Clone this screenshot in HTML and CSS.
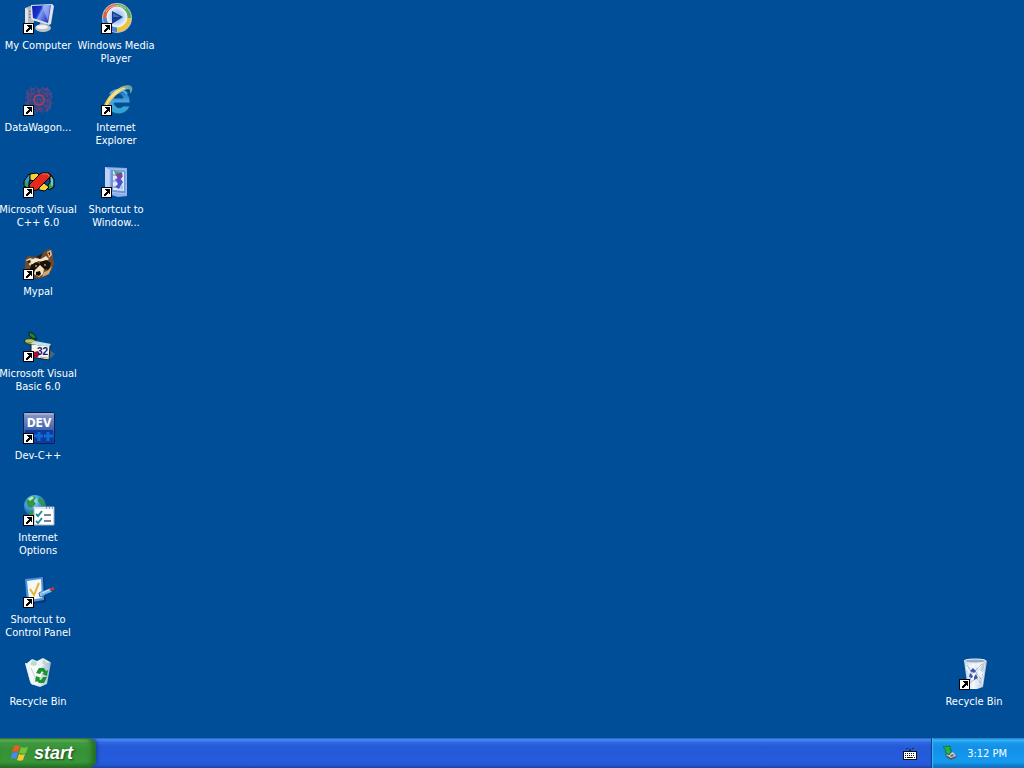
FILE: index.html
```html
<!DOCTYPE html>
<html lang="en">
<head>
    <meta charset="UTF-8">
    <meta name="viewport" content="width=device-width, initial-scale=1.0">
    <title>Desktop</title>
    <link rel="stylesheet" href="styles.css">
</head>
<body>
    <!-- Shared shapes -->
    <svg class="defs" width="0" height="0" aria-hidden="true">
        <defs>
            <symbol id="arrow" viewBox="0 0 11 11">
                <g stroke="none">
                    <path d="M0 0h11v11H0z" fill="#000"/>
                    <path d="M1 1h9v9H1z" fill="#fff"/>
                    <path d="M4 2h5v5H8V6H7v1H6v1H5v1H3V7h1V6h1V5h1V4H5V3H4z" fill="#000"/>
                </g>
            </symbol>
            <linearGradient id="screen" x1="0" y1="0" x2="1" y2="0.5">
                <stop offset="0" stop-color="#0a18a8"/>
                <stop offset="0.45" stop-color="#1c35cc"/>
                <stop offset="0.55" stop-color="#7f9cf5"/>
                <stop offset="1" stop-color="#2038c4"/>
            </linearGradient>
            <radialGradient id="disc">
                <stop offset="0" stop-color="#7fb2ec"/>
                <stop offset="0.6" stop-color="#b9d2f4"/>
                <stop offset="1" stop-color="#eef4ff"/>
            </radialGradient>
            <radialGradient id="globe" cx="0.4" cy="0.3" r="0.7">
                <stop offset="0" stop-color="#d8f6ff"/>
                <stop offset="0.4" stop-color="#4cb0e4"/>
                <stop offset="1" stop-color="#0b4c96"/>
            </radialGradient>
            <linearGradient id="ie" x1="0" y1="0" x2="0" y2="1">
                <stop offset="0" stop-color="#1468b4"/>
                <stop offset="0.5" stop-color="#4aa8e4"/>
                <stop offset="1" stop-color="#2ba0cc"/>
            </linearGradient>
            <linearGradient id="gold" x1="0" y1="1" x2="1" y2="0">
                <stop offset="0" stop-color="#e8b030"/>
                <stop offset="0.6" stop-color="#f6de78"/>
                <stop offset="1" stop-color="#3f8fae"/>
            </linearGradient>
            <linearGradient id="dev" x1="0" y1="0" x2="0" y2="1">
                <stop offset="0" stop-color="#8d9cc8"/>
                <stop offset="0.5" stop-color="#4868b0"/>
                <stop offset="1" stop-color="#0838a0"/>
            </linearGradient>
            <linearGradient id="bin" x1="0" y1="0" x2="1" y2="0">
                <stop offset="0" stop-color="#bccfe2"/>
                <stop offset="0.4" stop-color="#f6f9fc"/>
                <stop offset="1" stop-color="#a5b9ce"/>
            </linearGradient>
        </defs>
    </svg>

    <!-- Desktop -->
    <main class="desktop">
        <nav class="icons" aria-label="Desktop shortcuts">
            <a class="item" href="#my-computer">
                <svg class="icon" viewBox="0 0 32 32">
                    <path d="M2 6l5-2 4 2v17l-4 2-5-3z" fill="#b4b8c2"/>
                    <path d="M2 6l3 1v16l-3-1z" fill="#e2e2df"/>
                    <path d="M6 9l3 1M6 12l3 1M6 15l3 1" stroke="#73809a"/>
                    <path d="M18 19l5 1v4h-7z" fill="#9ea7b6"/>
                    <ellipse cx="20" cy="26" rx="8" ry="4" fill="#b9c0ca"/>
                    <ellipse cx="19" cy="25" rx="6" ry="2" fill="#f1f1ef"/>
                    <path d="M8 3l21-1 2 2-3 18-2 1-17-5-1-2z" fill="#dfe2e8"/>
                    <path d="M9 4l19-1-3 18-15-5z" fill="url(#screen)"/>
                    <path d="M19 4l8-1-2 16z" fill="#adc0ff" opacity=".6"/>
                    <use href="#arrow" y="21" width="11" height="11"/>
                </svg>
                <span class="label">My Computer</span>
            </a>
            <a class="item" href="#datawagon">
                <svg class="icon" viewBox="0 0 32 32" fill="none" stroke="#753f72">
                    <path d="M5 5h21l2 5v15l-4 3H6l-3-5V9z" fill="#5b4680" stroke="none" opacity=".35"/>
                    <circle cx="16" cy="16" r="5" stroke="#a03f5c" stroke-width="2"/>
                    <circle cx="16" cy="16" r="9" stroke-dasharray="3 2" stroke="#8c4064"/>
                    <path d="M16 11V5l-4-3M16 8l4-5M20 12l4-4V3M22 10h6M21 16h5l4-3M26 16l4 4M20 20l4 4v4M22 22h6M16 21v5l-4 3M16 25l4 4M12 20l-4 4M10 22H4M11 16H6l-4-3M6 16l-4 4M12 12L8 8V3M10 10H4V6"/>
                    <path d="M8 5h4M20 5h5l3 4v4M5 10v4M27 18v6l-4 3M5 18v5" stroke="#65518b"/>
                    <path d="M14 15h4v4h-4z" stroke="#5e4d80"/>
                    <use href="#arrow" y="21" width="11" height="11"/>
                </svg>
                <span class="label">DataWagon...</span>
            </a>
            <a class="item" href="#visual-cpp">
                <svg class="icon" viewBox="0 0 32 32" stroke="#000" stroke-linejoin="round">
                    <path d="M1 15l5-7 3 2-3 6v7l-5-3z" fill="#2fa54b"/>
                    <path d="M2 15l4-6v5l-2 4z" fill="#3c8fe5" stroke="none"/>
                    <path d="M7 8l7-1 3 3-5 5-5-1z" fill="#f6d53c"/>
                    <path d="M26 7l5 6v8l-5 3-2-3 3-5z" fill="#2fa54b"/>
                    <path d="M28 11l2 3v5l-2 1z" fill="#7fbcf2" stroke="none"/>
                    <path d="M16 21l5-4 5 4-4 4-6-1z" fill="#f6d53c"/>
                    <path d="M6 19L18 7h8l2 3-14 14-7 1z" fill="#e5291c"/>
                    <path d="M19 8h6l1 2" fill="none" stroke="#ff6b4d"/>
                    <use href="#arrow" y="21" width="11" height="11"/>
                </svg>
                <span class="label">Microsoft Visual<br>C++ 6.0</span>
            </a>
            <a class="item" href="#mypal">
                <svg class="icon" viewBox="0 0 32 32">
                    <path d="M2 12l3-4 8 1 7-4 5-4 4 1 1 7 1 6-2 7-6 6-8 3-8-3-5-7z" fill="#6e4a2f"/>
                    <path d="M24 4l4-2 1 5-3 3z" fill="#e7b386"/>
                    <path d="M25 5l2-1v4z" fill="#392319"/>
                    <path d="M3 12l4-2 6 2-6 6z" fill="#e6cda8"/>
                    <path d="M7 13l5-3 6 1 5-3 3 3-5 3-6-1-5 5z" fill="#f4e6ca"/>
                    <path d="M4 13l3-1 1 2-3 2z" fill="#392319"/>
                    <path d="M8 17l5-3 4 2-1 5-4 2-5-2z" fill="#17120e"/>
                    <path d="M17 14l6-2 5 3-2 7-5-1-4-4z" fill="#17120e"/>
                    <path d="M12 22l5-5 4 4-1 5-4 3-5-3z" fill="#f2dfbe"/>
                    <path d="M24 23l5-5-3 8-7 3 2-5z" fill="#d7a46c"/>
                    <path d="M13 24l4-1 1 3-2 2-3-1z" fill="#080808"/>
                    <circle cx="13" cy="18" r="1" fill="#d98c38"/>
                    <circle cx="22" cy="17" r="1" fill="#d98c38"/>
                    <path d="M13 9l7-4-3 6z" fill="#2b1b12"/>
                    <use href="#arrow" y="21" width="11" height="11"/>
                </svg>
                <span class="label">Mypal</span>
            </a>
            <a class="item" href="#visual-basic">
                <svg class="icon" viewBox="0 0 32 32">
                    <path d="M27 20l5 4-5 5h-9z" fill="#456487"/>
                    <path d="M6 2l5 2 3 5-5-1-3-3z" fill="#2b7d3e" stroke="#062a18"/>
                    <path d="M12 9v5" stroke="#062a18"/>
                    <path d="M1 11c3-4 9-3 12 0-4 5-9 4-12 0z" fill="#8fa544" stroke="#23351a"/>
                    <path d="M3 11h8" stroke="#dfe08a"/>
                    <path d="M8 14l19 2-1 14-18-3z" fill="#f6f5e8" stroke="#17191c"/>
                    <path d="M7 14l5-3 16 3-2 3z" fill="#c3e2e8"/>
                    <path d="M11 22l4-1 2 3-3 4-4-1z" fill="#a40e2d"/>
                    <text class="calendar-number" x="14" y="25">32</text>
                    <path d="M17 27l8 1" stroke="#aaa79c"/>
                    <use href="#arrow" y="21" width="11" height="11"/>
                </svg>
                <span class="label">Microsoft Visual<br>Basic 6.0</span>
            </a>
            <a class="item" href="#dev-cpp">
                <svg class="icon" viewBox="0 0 32 32">
                    <rect x="0.5" y="0.5" width="31" height="31" rx="1" fill="url(#dev)" stroke="#101e56"/>
                    <path d="M2 18h28v12H2z" fill="#0b3b9e"/>
                    <path d="M16 20v9M11 24h9M25 20v9M21 24h9" stroke="#126bd2" stroke-width="3"/>
                    <path d="M2 2h28" stroke="#b7c0de"/>
                    <text class="dev-text" x="16" y="15">DEV</text>
                    <use href="#arrow" y="21" width="11" height="11"/>
                </svg>
                <span class="label">Dev-C++</span>
            </a>
            <a class="item" href="#internet-options">
                <svg class="icon" viewBox="0 0 32 32">
                    <circle cx="12" cy="12" r="11" fill="url(#globe)"/>
                    <path d="M3 7l5-5 5 1-2 4 2 3-5 4-3-1zM16 3l5 4 2 6-5-2-3-4zM8 16l5 2-2 5-5-3z" fill="#31964c"/>
                    <path d="M5 5l4-3 2 2-4 3z" fill="#b9e9c9"/>
                    <path d="M11 13h20v18H11z" fill="#fff" stroke="#9fb3c4"/>
                    <path d="M11 13h20v2H11z" fill="#dbe6f0"/>
                    <path d="M23 14h1m2 0h1m2 0h1" stroke="#2c62a4"/>
                    <path d="M13 20l2 2 4-5M13 27l2 2 4-5" fill="none" stroke="#238b9a" stroke-width="2"/>
                    <path d="M21 21h7M21 27h7" stroke="#7b8291" stroke-width="2"/>
                    <use href="#arrow" y="21" width="11" height="11"/>
                </svg>
                <span class="label">Internet<br>Options</span>
            </a>
            <a class="item" href="#control-panel">
                <svg class="icon" viewBox="0 0 32 32">
                    <path d="M3 3l18-2 2 25-18 3z" fill="#0a3471"/>
                    <path d="M2 3l18-2 1 23-17 3z" fill="#4a92df"/>
                    <path d="M4 5l14-2 1 19-13 2z" fill="#f3f7fa"/>
                    <path d="M7 13l4 6 5-12" fill="none" stroke="#e3b72d" stroke-width="2"/>
                    <path d="M16 17l4-2 2 4-5 2z" fill="#b9ccdf" stroke="#476b91"/>
                    <path d="M18 18l10-4" stroke="#79b7ef" stroke-width="4"/>
                    <path d="M19 17l9-4" stroke="#c9e7ff"/>
                    <path d="M27 14l4-2" stroke="#b83a3c" stroke-width="3"/>
                    <use href="#arrow" y="21" width="11" height="11"/>
                </svg>
                <span class="label">Shortcut to<br>Control Panel</span>
            </a>
            <a class="item" href="#recycle-bin">
                <svg class="icon" viewBox="0 0 32 32">
                    <path d="M3 6l6-5 5 2 6-3 7 4-2 7H6z" fill="#eef4f4"/>
                    <path d="M9 2l5 2-1 6-6-2zM20 1l5 4-6 3z" fill="#b9dfc5"/>
                    <path d="M2 5l9 3 17-4-4 22-7 3-9-3z" fill="url(#bin)"/>
                    <path d="M2 5l9 3-1 19-3-3zM11 8l10-2-5 21z" fill="#fff" opacity=".7"/>
                    <path d="M8 10l6 14M22 7l-8 6" stroke="#c4d2df"/>
                    <path d="M13 15l3-5h5l2 3 2-1-1 6-5-2 2-1-2-2-2 3z" fill="#19952d"/>
                    <path d="M24 19l-3 6h-5l-2-2-2 1 1-6 5 2-2 1 2 1 2-3z" fill="#19952d"/>
                </svg>
                <span class="label">Recycle Bin</span>
            </a>
            <a class="item" href="#media-player">
                <svg class="icon" viewBox="0 0 32 32">
                    <circle cx="16" cy="16" r="15" fill="#b9c8d8"/>
                    <path d="M2 16A14 14 0 0 1 16 2v14z" fill="#e4603c"/>
                    <path d="M16 2a14 14 0 0 1 14 14H16z" fill="#5cab50"/>
                    <path d="M30 16a14 14 0 0 1-14 14V16z" fill="#efc23a"/>
                    <path d="M16 30A14 14 0 0 1 2 16h14z" fill="#4a86d6"/>
                    <path d="M5 10a13 13 0 0 1 20-3" fill="none" stroke="#fff" opacity=".5"/>
                    <circle cx="16" cy="15" r="10" fill="url(#disc)" stroke="#eef4fc"/>
                    <path d="M11 9l11 6-11 7z" fill="#123c91"/>
                    <path d="M12 11l7 4h-7z" fill="#3d6ebb"/>
                    <use href="#arrow" y="21" width="11" height="11"/>
                </svg>
                <span class="label">Windows Media<br>Player</span>
            </a>
            <a class="item" href="#internet-explorer">
                <svg class="icon" viewBox="0 0 32 32">
                    <path d="M29 19H13c1 5 7 6 9 3h7c-3 8-12 10-18 6-7-5-6-15 0-20 8-6 19 0 18 11zM13 14h9c-1-5-8-5-9 0z" fill="url(#ie)" stroke="#0e4f8c"/>
                    <path d="M9 10c4-5 12-6 17 0" fill="none" stroke="#5aaee6" stroke-width="2"/>
                    <path d="M3 28C0 24 6 13 14 7c7-6 15-8 17-4 1 2 0 4-2 7 1-5-1-6-5-4C16 8 6 19 5 28z" fill="url(#gold)"/>
                    <path d="M4 25C6 15 16 6 24 4" fill="none" stroke="#fff1a3"/>
                    <use href="#arrow" y="21" width="11" height="11"/>
                </svg>
                <span class="label">Internet<br>Explorer</span>
            </a>
            <a class="item" href="#window-shortcut">
                <svg class="icon" viewBox="0 0 32 32">
                    <path d="M4 1l22 1v28l-9 1-13-4z" fill="#8daee6"/>
                    <path d="M4 1l5 3v23l-5-2z" fill="#bcd2f7"/>
                    <path d="M9 3l16 1v24L9 26z" fill="#6d96da" stroke="#a8c2f1"/>
                    <path d="M12 5l11 1v19l-11-1z" fill="#dce7fb"/>
                    <path d="M13 5l8 1 1 5-7-1z" fill="#3fa564"/>
                    <path d="M15 8l6-1v5l-4 2z" fill="#893cad"/>
                    <path d="M14 13l5-1 3 4-4 7-4-2 3-3z" fill="#4f55c5"/>
                    <path d="M12 9h3M12 15h3M12 21h3" stroke="#7486b5"/>
                    <path d="M20 19l2 1v4l-3-1z" fill="#a3c9ee"/>
                    <use href="#arrow" y="21" width="11" height="11"/>
                </svg>
                <span class="label">Shortcut to<br>Window...</span>
            </a>
        </nav>

        <a class="item trash" href="#recycle-bin-shortcut">
            <svg class="icon" viewBox="0 0 32 32">
                <path d="M5 3l4-2h15l4 2-4 26-6 2H9z" fill="url(#bin)"/>
                <ellipse cx="16" cy="3" rx="11" ry="2" fill="#93a9bf" stroke="#e3edf5"/>
                <path d="M7 6l6 2-2 7-4-4zM15 6l9-1-3 6zM20 12l4 2-2 7-5-3z" fill="#eef4fa"/>
                <path d="M8 7l5 8-2 8M23 6l-7 7 6 8M10 26l7-6 5 5" fill="none" stroke="#9fb1c6"/>
                <path d="M11 13l3-3 3 3-2 2-2-1zM17 16l2 4-4 2v-3zM13 20l-3-1 1-4 3 3z" fill="#4053ae"/>
                <path d="M20 4l-1 23M26 5l-3 22" stroke="#fff" opacity=".6"/>
                <use href="#arrow" y="21" width="11" height="11"/>
            </svg>
            <span class="label">Recycle Bin</span>
        </a>
    </main>

    <!-- Taskbar -->
    <footer class="taskbar">
        <button class="start" type="button">
            <svg class="flag" viewBox="0 0 18 18" aria-hidden="true">
                <path d="M3 2c2-1 4-1 6 0L7 8C5 7 3 7 1 8z" fill="#ee5a26"/>
                <path d="M10 3c2 1 4 1 7 0l-2 6c-2 1-4 1-7 0z" fill="#75c43c"/>
                <path d="M1 9c2-1 4-1 6 0l-2 6c-2-1-4-1-5 0z" fill="#4d86ef"/>
                <path d="M8 10c2 1 4 1 6 0l-2 6c-2 1-4 1-6 0z" fill="#f7c733"/>
            </svg>
            <span>start</span>
        </button>
        <div class="tasks"></div>
        <button class="keyboard" type="button" aria-label="Keyboard">
            <svg viewBox="0 0 14 14" width="14" height="14">
                <path d="M3 2.5h2m1 1h2m1-1h2m-5 2h2" fill="none" stroke="#132c72"/>
                <path d="M0 5h14v9H0z" fill="#111"/>
                <path d="M1 6h12v7H1z" fill="#fff"/>
                <path d="M2 7.5h10M2 9.5h10" stroke="#111" stroke-dasharray="1 1"/>
                <path d="M2 11.5h1m1 0h6m1 0h1" stroke="#111"/>
            </svg>
        </button>
        <div class="tray">
            <svg viewBox="0 0 16 16" width="16" height="16" aria-hidden="true">
                <path d="M3 9l8-2 4 5-6 3-5-3z" fill="#4c5964"/>
                <path d="M4 10l7-3 3 4-5 2z" fill="#c8d0d1"/>
                <path d="M8 10l3-1 1 2-3 1z" fill="#68757e"/>
                <path d="M1 2l7-1v4h2l-3 5-4-3 1-2z" fill="#23b44a" stroke="#137a39"/>
            </svg>
            <time datetime="15:12">3:12 PM</time>
        </div>
    </footer>
</body>
</html>
```
FILE: styles.css
```css
/* Global Styling */
* {
    box-sizing: border-box;
}

body {
    display: flex;
    flex-direction: column;
    min-height: 100vh;
    margin: 0;
    background: #004e98;
    color: #fff;
    font-family: Tahoma, "DejaVu Sans Condensed", "DejaVu Sans", sans-serif;
    font-size: 11px;
}

button {
    margin: 0;
    border: 0;
    color: inherit;
    font: inherit;
    cursor: pointer;
}

.defs {
    position: absolute;
}

/* Desktop */
.desktop {
    flex: 1;
    display: flex;
    justify-content: space-between;
    align-items: flex-end;
}

.icons {
    display: grid;
    grid-auto-flow: column;
    grid-template-rows: repeat(9, 82px);
    grid-auto-columns: 78px;
}

.item {
    display: flex;
    flex-direction: column;
    align-items: center;
    gap: 5px;
    width: 78px;
    height: 82px;
    padding-top: 2px;
    color: #fff;
    text-decoration: none;
}

.trash {
    margin-right: 10px;
}

.icon {
    flex: none;
    width: 32px;
    height: 32px;
}

.label {
    padding-right: 2px;
    line-height: 13px;
    text-align: center;
    white-space: nowrap;
}

.calendar-number {
    fill: #15157c;
    font: bold 10px "Liberation Sans", sans-serif;
}

.dev-text {
    fill: #fff;
    font: bold 12px "DejaVu Sans Condensed", sans-serif;
    text-anchor: middle;
}

/* Taskbar */
.taskbar {
    display: flex;
    height: 30px;
    background: linear-gradient(to bottom, #2560c8 0, #4a8cf2 2px, #2f6ae2 4px, #2459d8 9px, #255bdc 23px, #2458d4 27px, #1b43a6 30px);
}

.start {
    display: flex;
    align-items: center;
    gap: 5px;
    width: 96px;
    padding: 0 0 0 11px;
    border-radius: 0 8px 8px 0;
    background: linear-gradient(to bottom, #2c7c2c 0, #69b568 2px, #3e9a3e 5px, #369136 12px, #389638 24px, #246e24 30px);
    box-shadow: inset -4px 0 5px #246e24, 2px 0 3px #1b48ac;
    font: italic bold 18px "Liberation Sans", Arial, sans-serif;
    text-shadow: 1px 1px 2px #1d431d;
}

.flag {
    width: 18px;
    height: 18px;
}

.tasks {
    flex: 1;
}

.keyboard {
    display: flex;
    align-items: center;
    justify-content: center;
    width: 42px;
    padding: 0;
    background: none;
}

.tray {
    display: flex;
    align-items: center;
    justify-content: space-between;
    width: 93px;
    padding: 0 17px 0 10px;
    border-left: 1px solid #0b3f94;
    background: linear-gradient(to bottom, #1272c8 0, #36b6f4 2px, #1b97ea 5px, #1290e8 10px, #159af0 24px, #1280d2 27px, #1068b4 30px);
    box-shadow: inset 1px 0 1px #38bdf5;
}
```
